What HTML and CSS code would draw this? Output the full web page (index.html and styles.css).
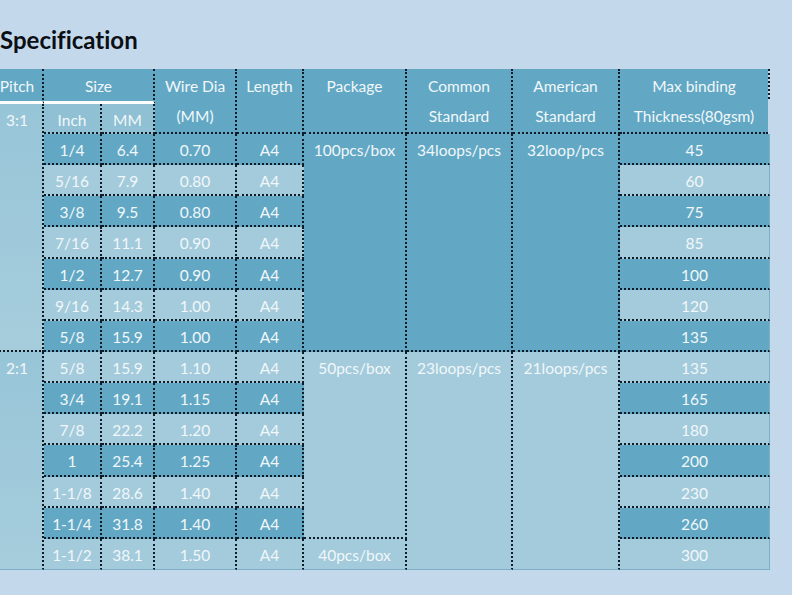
FILE: index.html
```html
<!DOCTYPE html>
<html>
<head>
<meta charset="utf-8">
<link rel="stylesheet" href="styles.css">
</head>
<body>
<div class="page">
  <h1 class="title">Specification</h1>
  <div class="spec">
    <div class="c hd br wb">Pitch</div>
    <div class="c hd br wb s2">Size</div>
    <div class="c hd br bb r2">Wire Dia<br>(MM)</div>
    <div class="c hd br bb r2">Length</div>
    <div class="c hd br bb r2">Package</div>
    <div class="c hd br bb r2">Common<br>Standard</div>
    <div class="c hd br bb r2">American<br>Standard</div>
    <div class="c hd bb r2 maxh">Max binding<br>Thickness(80gsm)</div>

    <div class="c pt br bb r8">3:1</div>
    <div class="c md br bb">Inch</div>
    <div class="c md br bb">MM</div>

    <div class="c dk br bb">1/4</div><div class="c dk br bb">6.4</div><div class="c dk br bb">0.70</div><div class="c dk br bb">A4</div>
    <div class="c dk br bb r7">100pcs/box</div>
    <div class="c dk br bb r7">34loops/pcs</div>
    <div class="c dk br bb r7">32loop/pcs</div>
    <div class="c dk bb ed">45</div>

    <div class="c lt br bb">5/16</div><div class="c lt br bb">7.9</div><div class="c lt br bb">0.80</div><div class="c lt br bb">A4</div><div class="c lt bb ed">60</div>
    <div class="c dk br bb">3/8</div><div class="c dk br bb">9.5</div><div class="c dk br bb">0.80</div><div class="c dk br bb">A4</div><div class="c dk bb ed">75</div>
    <div class="c lt br bb">7/16</div><div class="c lt br bb">11.1</div><div class="c lt br bb">0.90</div><div class="c lt br bb">A4</div><div class="c lt bb ed">85</div>
    <div class="c dk br bb">1/2</div><div class="c dk br bb">12.7</div><div class="c dk br bb">0.90</div><div class="c dk br bb">A4</div><div class="c dk bb ed">100</div>
    <div class="c lt br bb">9/16</div><div class="c lt br bb">14.3</div><div class="c lt br bb">1.00</div><div class="c lt br bb">A4</div><div class="c lt bb ed">120</div>
    <div class="c dk br bb">5/8</div><div class="c dk br bb">15.9</div><div class="c dk br bb">1.00</div><div class="c dk br bb">A4</div><div class="c dk bb ed">135</div>

    <div class="c pt br r7 last">2:1</div>
    <div class="c lt br bb">5/8</div><div class="c lt br bb">15.9</div><div class="c lt br bb">1.10</div><div class="c lt br bb">A4</div>
    <div class="c lt br bb r6">50pcs/box</div>
    <div class="c lt br r7 last">23loops/pcs</div>
    <div class="c lt br r7 last">21loops/pcs</div>
    <div class="c lt bb ed">135</div>

    <div class="c dk br bb">3/4</div><div class="c dk br bb">19.1</div><div class="c dk br bb">1.15</div><div class="c dk br bb">A4</div><div class="c dk bb ed">165</div>
    <div class="c lt br bb">7/8</div><div class="c lt br bb">22.2</div><div class="c lt br bb">1.20</div><div class="c lt br bb">A4</div><div class="c lt bb ed">180</div>
    <div class="c dk br bb">1</div><div class="c dk br bb">25.4</div><div class="c dk br bb">1.25</div><div class="c dk br bb">A4</div><div class="c dk bb ed">200</div>
    <div class="c lt br bb">1-1/8</div><div class="c lt br bb">28.6</div><div class="c lt br bb">1.40</div><div class="c lt br bb">A4</div><div class="c lt bb ed">230</div>
    <div class="c dk br bb">1-1/4</div><div class="c dk br bb">31.8</div><div class="c dk br bb">1.40</div><div class="c dk br bb">A4</div><div class="c dk bb ed">260</div>
    <div class="c lt br last">1-1/2</div><div class="c lt br last">38.1</div><div class="c lt br last">1.50</div><div class="c lt br last">A4</div>
    <div class="c lt br last">40pcs/box</div>
    <div class="c lt ed last">300</div>
  </div>
</div>
</body>
</html>
```

FILE: styles.css
```css
html, body {
  margin: 0;
  padding: 0;
  background: #c4d8ec;
}

.page {
  width: 792px;
  height: 595px;
  overflow: hidden;
  background: #c4d8ec;
  font-family: Lato, "Open Sans", sans-serif;
  font-variant-ligatures: none;
}

.title {
  margin: 0;
  height: 69px;
  box-sizing: border-box;
  padding-top: 27px;
  font-size: 24px;
  line-height: 26px;
  font-weight: 700;
  color: #0b0f14;
}

.spec {
  display: grid;
  grid-template-columns: 52px 58px 53px 82px 67px 103px 106px 107px 150px;
  grid-template-rows: 35px 30px repeat(14, 31.143px);
  margin-left: -8px;
  width: 778px;
}

.c {
  box-sizing: border-box;
  text-align: center;
  color: #f1f7fa;
  font-size: 15.5px;
  line-height: 30px;
  padding-top: 1px;
  white-space: nowrap;
}

.hd { background: #62a8c4; padding-top: 2px; }
.dk { background: #62a8c4; }
.lt { background: #a3cbdb; }
.md { background: #8fc0d3; }
.pt { background: linear-gradient(#97c5d8, #a6cddc); }

.br { border-right: 2px dotted #101b25; }
.bb { border-bottom: 2px dotted #101b25; }
.wb { border-bottom: 3px solid #ffffff; }
.last { border-bottom: 1px solid #7bb0c8; }
.ed { border-right: 1px solid #7bb0c8; }

.s2 { grid-column: span 2; }
.r2 { grid-row: span 2; }
.r6 { grid-row: span 6; }
.r7 { grid-row: span 7; }
.r8 { grid-row: span 8; }

.maxh {
  position: relative;
  margin-right: 2px;
}
.maxh::after {
  content: "";
  position: absolute;
  top: 0;
  right: -2px;
  height: 30px;
  border-right: 2px dotted #101b25;
}
```
